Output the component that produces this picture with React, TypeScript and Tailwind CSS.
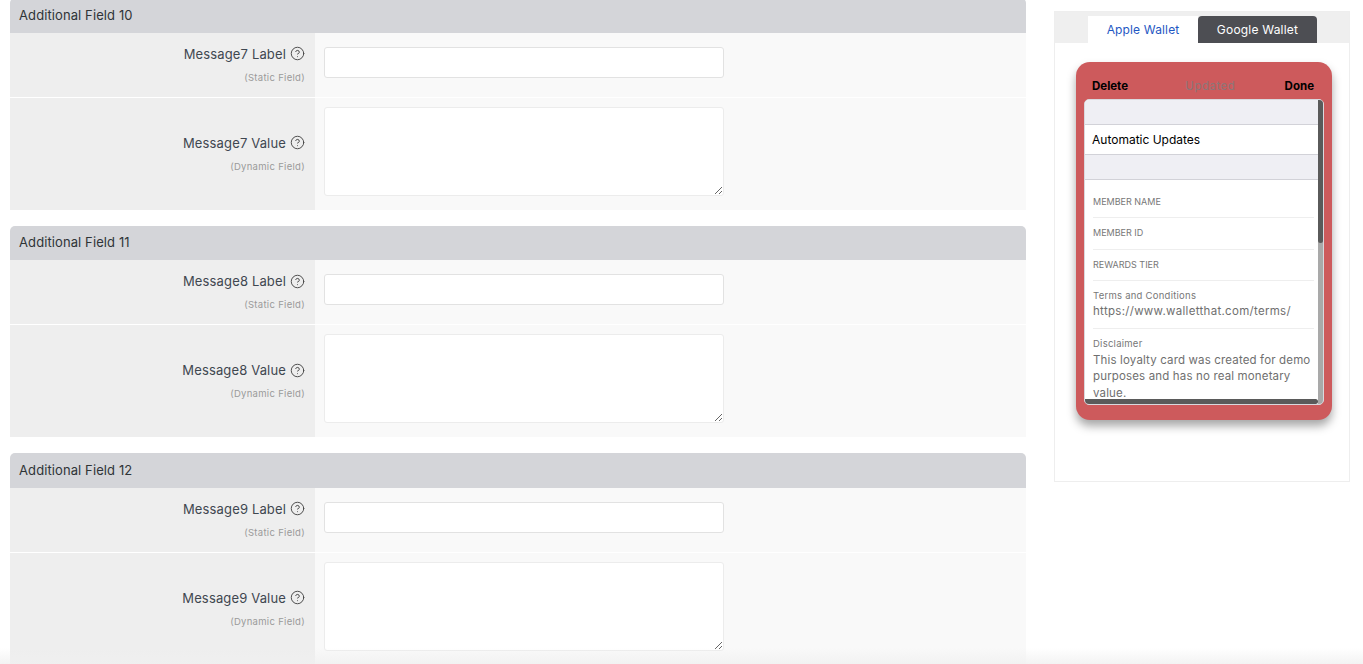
import React from 'react';
import { CircleHelp } from 'lucide-react';

const sections = [
  { title: 'Additional Field 10', n: 7 },
  { title: 'Additional Field 11', n: 8 },
  { title: 'Additional Field 12', n: 9 },
];

function Label({ text, hint }: { text: string; hint: string }) {
  return (
    <div className="w-[305px] shrink-0 bg-[#eeeeee] pr-[10px] pt-[2px] flex flex-col items-end justify-center">
      <div className="flex items-center gap-[4px] text-[13px] leading-[20px] text-[#3f4750] tracking-[0.15px]">
        <span>{text}</span>
        <CircleHelp size={15} strokeWidth={1.5} className="text-[#444444]" />
      </div>
      <div className="mt-[4px] text-[9.5px] leading-[20px] text-[#9a9a9a] tracking-[0.3px]">{hint}</div>
    </div>
  );
}

function Section({ title, n }: { title: string; n: number }) {
  return (
    <section className="mb-[16px]">
      <div className="h-[34.5px] bg-[#d4d5d9] rounded-t-[5px] pl-[9px] flex items-center text-[13px] text-[#2f3437] tracking-[0.1px]">
        {title}
      </div>
      <div className="flex h-[64px] border-b border-white box-content">
        <Label text={`Message${n} Label`} hint="(Static Field)" />
        <div className="flex-1 bg-[#f9f9f9] pl-[9px] pt-[14px]">
          <input className="block w-[400px] h-[31px] bg-white border border-[#e2e2e2] rounded-[3px] outline-none" />
        </div>
      </div>
      <div className="flex h-[112px]">
        <Label text={`Message${n} Value`} hint="(Dynamic Field)" />
        <div className="flex-1 bg-[#f9f9f9] pl-[9px] pt-[9px]">
          <textarea className="block w-[400px] h-[89px] bg-white border border-[#ececec] rounded-[3px] outline-none" />
        </div>
      </div>
    </section>
  );
}

function Field({ label, upper, children }: { label: string; upper?: boolean; children?: React.ReactNode }) {
  return (
    <div className={`border-b border-[#eeeeee] ${children ? 'pt-[6.5px] pb-[9px]' : 'pt-[7px] pb-[7.5px]'}`}>
      <div className={`leading-[16px] text-[#777777] ${upper ? 'text-[9px]' : 'text-[9.5px] tracking-[0.25px]'}`}>{label}</div>
      {children}
    </div>
  );
}

function WalletPreview() {
  return (
    <aside className="w-[296px] h-[471px] mt-[11px] ml-[28px] shrink-0 border border-[#eeeeee]">
      <div className="h-[31px] bg-[#efefef] pl-[33px] pt-[4px] flex">
        <div className="w-[110px] h-[27px] bg-white flex items-center justify-center text-[12px] tracking-[0.15px] text-[#1f57c3]">
          Apple Wallet
        </div>
        <div className="w-[119px] h-[27px] bg-[#4d4e53] rounded-t-[4px] flex items-center justify-center text-[12px] tracking-[0.2px] text-white">
          Google Wallet
        </div>
      </div>
      <div className="mt-[19px] ml-[21px] w-[256px] h-[358px] rounded-[14px] bg-[#cd5a5c] shadow-[0_6px_10px_rgba(0,0,0,0.35)] pt-[14px] px-[8px]">
        <div className="h-[21px] mb-[2px] pl-[8px] pr-[10px] flex items-center justify-between text-[11.5px]">
          <span className="font-bold text-black">Delete</span>
          <span className="ml-[8px] text-[#8c7678] tracking-[0.5px]">Updated</span>
          <span className="font-bold text-black">Done</span>
        </div>
        <div className="relative w-[240px] h-[306px] bg-white rounded-[5px] overflow-hidden border border-[#d9d9de]">
          <div className="h-[24px] bg-[#efeff4] border-b border-[#d2d2d8] box-content" />
          <div className="h-[29px] pl-[7px] flex items-center text-[12px] text-black border-b border-[#d2d2d8] box-content">
            Automatic Updates
          </div>
          <div className="h-[24px] bg-[#efeff4] border-b border-[#d2d2d8] box-content" />
          <div className="pl-[8px] pr-[8px] w-[237px] pt-[6.5px]">
            <Field label="MEMBER NAME" upper />
            <Field label="MEMBER ID" upper />
            <Field label="REWARDS TIER" upper />
            <Field label="Terms and Conditions">
              <div className="-mt-[1px] text-[11.5px] leading-[16.5px] text-[#6f6f6f] tracking-[0.3px]">
                https://www.walletthat.com/terms/
              </div>
            </Field>
            <Field label="Disclaimer">
              <div className="text-[11.5px] leading-[16.5px] text-[#6f6f6f] tracking-[0.15px]">
                This loyalty card was created for demo purposes and has no real monetary value.
              </div>
            </Field>
          </div>
          {/* scrollbars are drawn, the panel doesn't really scroll */}
          <div className="absolute top-0 right-0 bottom-0 w-[5px] bg-[#a9a9a9]">
            <div className="h-[143px] bg-[#5a5a5a] rounded-b-[3px]" />
          </div>
          <div className="absolute left-0 right-[5px] bottom-0 h-[5px] bg-[#5a5a5a] rounded-r-[3px]" />
        </div>
      </div>
    </aside>
  );
}

export default function App() {
  return (
    <div className="relative h-[664px] overflow-hidden bg-white font-['Inter','Liberation_Sans',sans-serif]">
      <div className="flex pl-[10px] items-start">
        <main className="w-[1016px] shrink-0 -mt-[1.6px]">
          {sections.map((s) => (
            <Section key={s.n} title={s.title} n={s.n} />
          ))}
        </main>
        <WalletPreview />
      </div>
      <div className="absolute left-0 right-0 bottom-0 h-[16px] bg-gradient-to-b from-transparent to-[#f0f0f0]/80" />
    </div>
  );
}
